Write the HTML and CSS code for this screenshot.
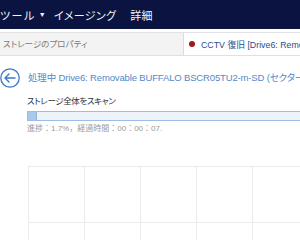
FILE: index.html
```html
<!DOCTYPE html>
<html lang="ja">
<head>
  <meta charset="UTF-8">
  <title>CCTV 復旧</title>
  <link rel="stylesheet" href="styles.css">
</head>
<body>
  <div class="menubar">
    <span class="menu-item">ツール</span>
    <span class="menu-arrow">▼</span>
    <span class="menu-item">イメージング</span>
    <span class="menu-item">詳細</span>
  </div>

  <div class="tabbar">
    <div class="tab-title">ストレージのプロパティ</div>
    <div class="tab">
      <span class="tab-dot"></span>
      <span class="tab-text">CCTV 復旧 [Drive6: Removable BUFFALO]</span>
    </div>
  </div>

  <div class="content">
    <div class="head">
      <div class="back">
        <svg width="20" height="20" viewBox="0 0 20 20">
          <circle cx="10" cy="10" r="9.2" fill="none" stroke="#3a78c8" stroke-width="1.3"/>
          <path d="M5 10 H15 M9 6 L5 10 L9 14" fill="none" stroke="#3a78c8" stroke-width="1.4" stroke-linecap="round" stroke-linejoin="round"/>
        </svg>
      </div>
      <div class="title">処理中 Drive6: Removable BUFFALO BSCR05TU2-m-SD (セクター 0-3964927)</div>
    </div>

    <div class="scan">
      <div class="scan-label">ストレージ全体をスキャン</div>
      <div class="progress">
        <div class="progress-fill" style="width: 3.4%"></div>
      </div>
      <div class="progress-text">進捗：1.7%，経過時間：00：00：07.</div>
    </div>

    <div class="blocks">
      <div class="block"></div>
      <div class="block"></div>
      <div class="block"></div>
      <div class="block"></div>
      <div class="block"></div>
      <div class="block"></div>
      <div class="block"></div>
      <div class="block"></div>
      <div class="block"></div>
      <div class="block"></div>
    </div>
  </div>
</body>
</html>
```

FILE: styles.css
```css
* {
  box-sizing: border-box;
  margin: 0;
  padding: 0;
}

body {
  width: 300px;
  height: 240px;
  overflow: hidden;
  background-color: #ffffff;
  font-family: 'Liberation Sans', 'Noto Sans CJK JP', sans-serif;
  font-feature-settings: "palt";
}

.menubar {
  height: 29px;
  background-color: #0b1440;
  color: #f2f4fa;
  display: flex;
  align-items: center;
  font-size: 11px;
  letter-spacing: 0.3px;
  white-space: nowrap;
}

.menu-item {
  margin-right: 14px;
}

.menu-item:first-child {
  letter-spacing: 1.5px;
  margin-right: 3px;
}

.menu-arrow {
  font-size: 7px;
  margin-right: 8px;
}

.tabbar {
  margin-top: 3px;
  height: 24px;
  background-color: #f3f3f3;
  border-top: 1px solid #e2e2e2;
  border-bottom: 1px solid #e0e0e0;
  display: flex;
  justify-content: space-between;
  white-space: nowrap;
  overflow: hidden;
}

.tab-title {
  font-size: 8.5px;
  color: #7a7a7a;
  padding-left: 3px;
  line-height: 22px;
}

.tab {
  width: 117px;
  background-color: #ffffff;
  border-left: 1px solid #dcdcdc;
  display: flex;
  align-items: center;
  gap: 6px;
  padding-left: 5px;
  overflow: hidden;
}

.tab-dot {
  width: 6px;
  height: 6px;
  border-radius: 50%;
  background-color: #a01818;
  flex-shrink: 0;
}

.tab-text {
  font-size: 8.8px;
  color: #2c4c8c;
}

.content {
  padding-top: 12px;
}

.head {
  display: flex;
  align-items: center;
  gap: 8px;
  white-space: nowrap;
}

.back {
  width: 20px;
  height: 20px;
  flex-shrink: 0;
}

.back svg {
  display: block;
}

.title {
  font-size: 9.5px;
  letter-spacing: -0.15px;
  color: #5289c9;
  overflow: hidden;
  margin-top: -3px;
}

.scan {
  padding-left: 27px;
  margin-top: 6px;
}

.scan-label {
  font-size: 8.5px;
  letter-spacing: -0.4px;
  color: #333333;
  line-height: 14px;
}

.progress {
  margin-top: 3px;
  height: 10px;
  background-color: #eef3fa;
  border: 1px solid #9dbde3;
  width: 280px;
}

.progress-fill {
  height: 100%;
  background-color: #a9c8ec;
  border-right: 1px solid #8fb2de;
}

.progress-text {
  font-size: 8px;
  font-feature-settings: normal;
  line-height: 12px;
  color: #9a9a9a;
  margin-top: 2px;
  white-space: nowrap;
}

.blocks {
  margin-top: 31px;
  margin-left: 28px;
  display: grid;
  grid-template-columns: repeat(5, 56px);
  grid-auto-rows: 56px;
  border-top: 1px solid #ebebeb;
  border-left: 1px solid #ebebeb;
}

.block {
  border-right: 1px solid #ebebeb;
  border-bottom: 1px solid #ebebeb;
}
```
